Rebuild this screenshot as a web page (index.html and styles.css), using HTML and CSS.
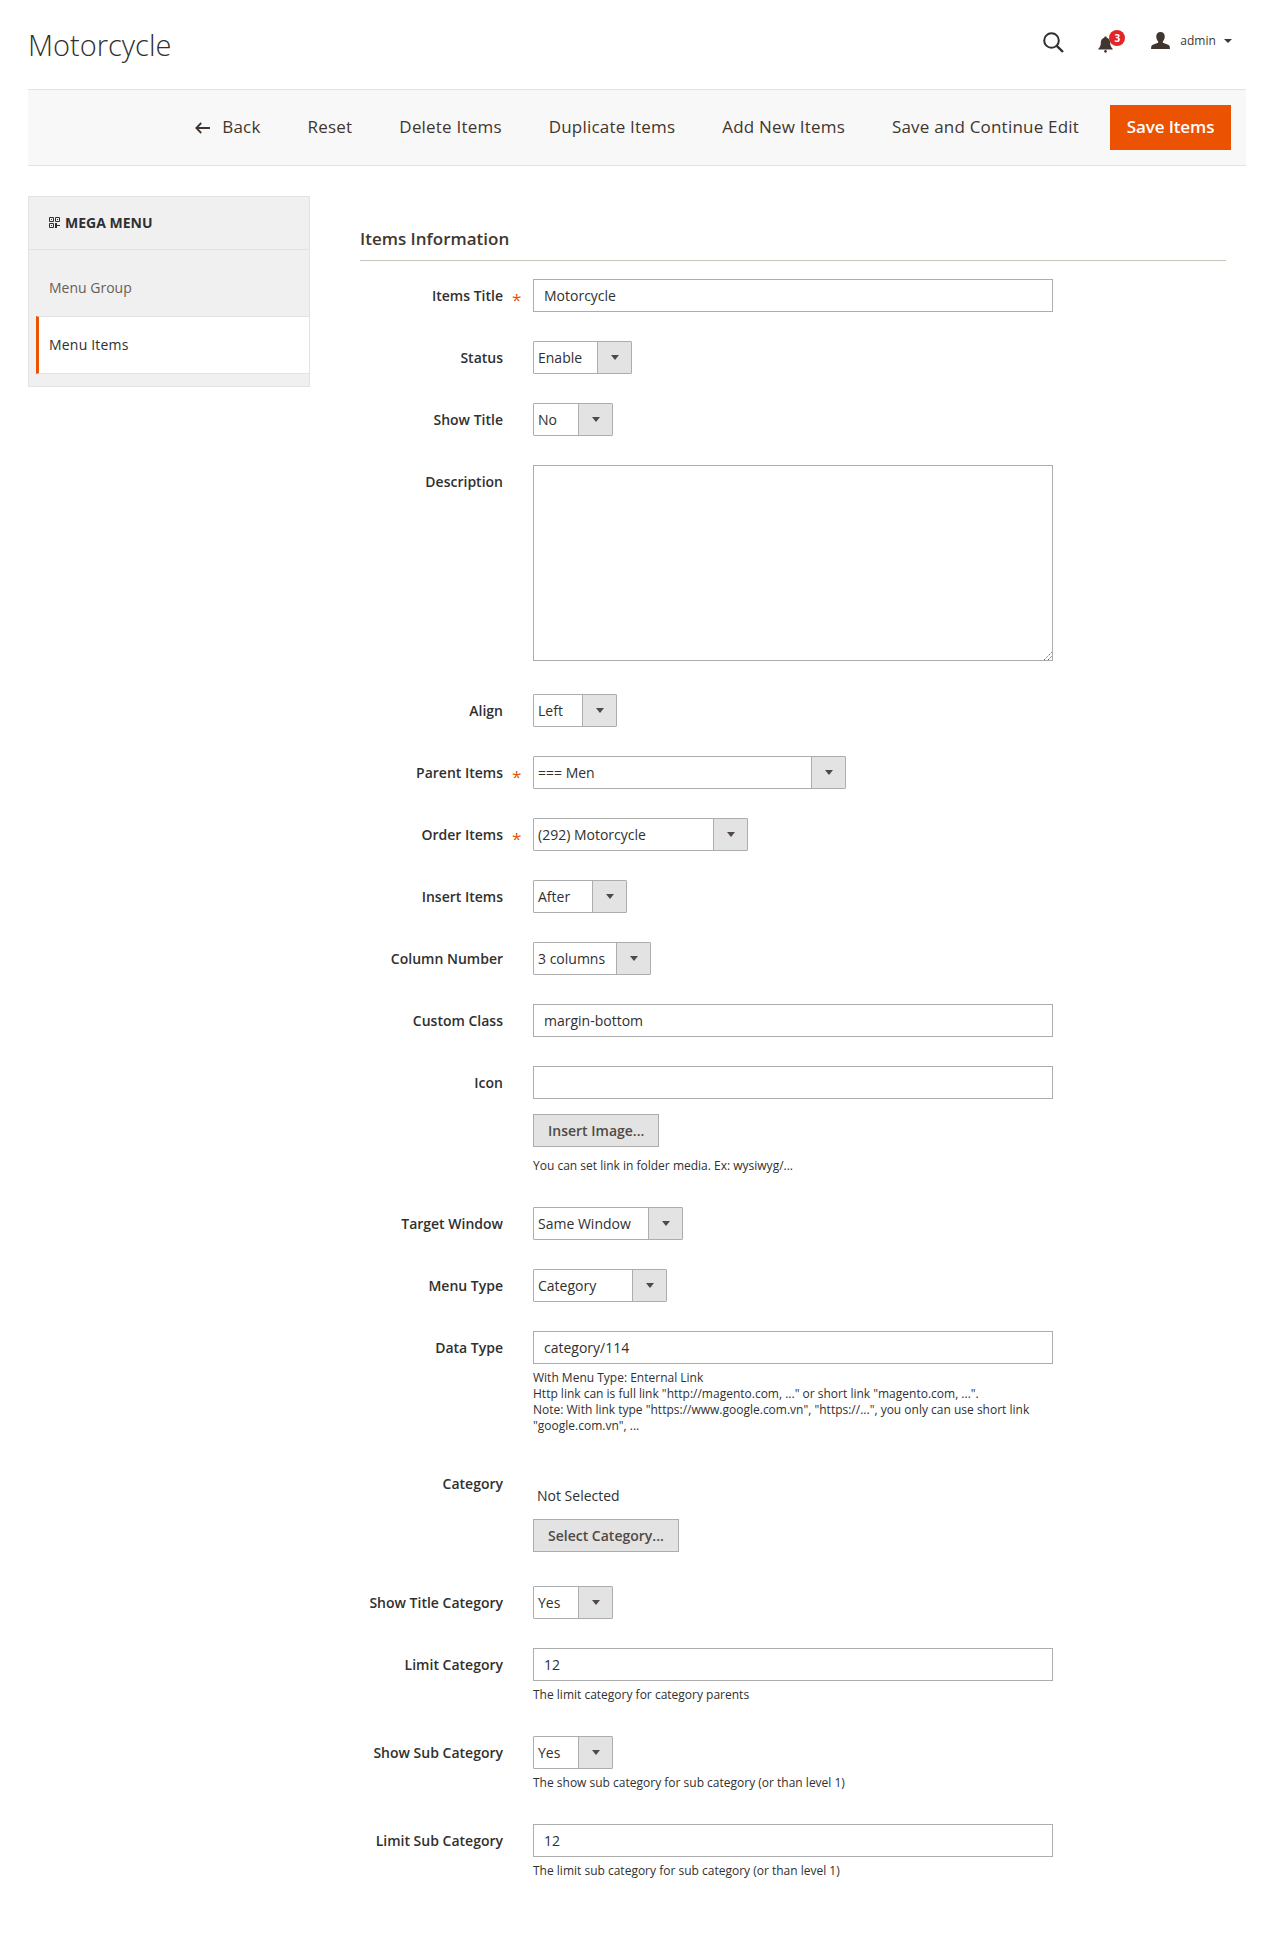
FILE: index.html
```html
<!DOCTYPE html>
<html lang="en">
<head>
<meta charset="utf-8">
<title>Motorcycle</title>
<link rel="stylesheet" href="styles.css">
</head>
<body>
<header class="page-header">
  <h1 class="page-title">Motorcycle</h1>
  <div class="header-tools">
    <svg class="icon-search" width="21" height="21" viewBox="0 0 21 21"><circle cx="8.500" cy="8.500" r="7.300" fill="none" stroke="#303030" stroke-width="2"/><path d="M13.800 13.800 L20 20" stroke="#303030" stroke-width="2.400"/></svg>
    <div class="bell">
      <svg width="15" height="18" viewBox="0 0 17 20"><path d="M8.500 1.500c-.9 0-1.400.6-1.500 1.400C4.500 3.600 3.200 5.700 3.200 8.300c0 3.300-.8 5.200-2.700 6.800v1.100h16v-1.100c-1.900-1.600-2.700-3.500-2.700-6.800 0-2.600-1.300-4.700-3.800-5.400-.1-.8-.6-1.400-1.500-1.400z" fill="#41362f"/><circle cx="8.500" cy="18.300" r="1.500" fill="#41362f"/></svg>
      <span class="bell-badge">3</span>
    </div>
    <div class="user">
      <svg width="19" height="17" viewBox="0 0 20 18"><path d="M10 0c-2.900 0-4.500 2-4.500 4.800 0 2.200.9 4 2 5v1.500c-2.800 1-6.200 1.800-7.200 3.500L0 18h20l-.3-3.200c-1-1.700-4.400-2.500-7.200-3.500V9.800c1.100-1 2-2.800 2-5C14.500 2 12.900 0 10 0z" fill="#41362f"/></svg>
      <span class="user-name">admin</span>
      <span class="caret-small"></span>
    </div>
  </div>
</header>

<nav class="toolbar">
  <a class="tool tool-back">
    <svg width="15" height="12" viewBox="0 0 15 12"><path d="M6.200 1 1.300 6l4.900 5M1.500 6H15" fill="none" stroke="#41362f" stroke-width="1.800"/></svg>
    Back
  </a>
  <a class="tool">Reset</a>
  <a class="tool">Delete Items</a>
  <a class="tool">Duplicate Items</a>
  <a class="tool">Add New Items</a>
  <a class="tool">Save and Continue Edit</a>
  <button class="save-btn">Save Items</button>
</nav>

<main class="layout">
  <aside class="sidebar">
    <div class="sidebar-head">
      <svg width="11" height="11" viewBox="0 0 11 11"><path d="M.5.500h4v4h-4zM6.500.500h4v4h-4zM.5 6.500h4v4h-4z" fill="none" stroke="#303030"/><path d="M2 2h1v1H2zM8 2h1v1H8zM2 8h1v1H2zM6 6h2v2h3v1H8v2H6z" fill="#303030"/></svg>
      <span>MEGA MENU</span>
    </div>
    <div class="side-link">Menu Group</div>
    <div class="side-link side-link-active">Menu Items</div>
  </aside>

  <section class="content">
    <h2 class="section-title">Items Information</h2>

    <div class="row"><label class="label req">Items Title</label><div class="control"><div class="input">Motorcycle</div></div></div>
    <div class="row"><label class="label">Status</label><div class="control"><div class="select w-99"><span>Enable</span><i></i></div></div></div>
    <div class="row"><label class="label">Show Title</label><div class="control"><div class="select w-80"><span>No</span><i></i></div></div></div>
    <div class="row row-text"><label class="label">Description</label><div class="control"><div class="textarea"><svg class="grip" width="9" height="9" viewBox="0 0 9 9"><path d="M1 9 9 1M5 9l4-4" stroke="#666" stroke-dasharray="1.400 1" fill="none"/></svg></div></div></div>
    <div class="row"><label class="label">Align</label><div class="control"><div class="select w-84"><span>Left</span><i></i></div></div></div>
    <div class="row"><label class="label req">Parent Items</label><div class="control"><div class="select w-313"><span>=== Men</span><i></i></div></div></div>
    <div class="row"><label class="label req">Order Items</label><div class="control"><div class="select w-215"><span>(292) Motorcycle</span><i></i></div></div></div>
    <div class="row"><label class="label">Insert Items</label><div class="control"><div class="select w-94"><span>After</span><i></i></div></div></div>
    <div class="row"><label class="label">Column Number</label><div class="control"><div class="select w-118"><span>3 columns</span><i></i></div></div></div>
    <div class="row"><label class="label">Custom Class</label><div class="control"><div class="input">margin-bottom</div></div></div>
    <div class="row row-icon"><label class="label">Icon</label><div class="control"><div class="input"></div><button class="btn btn-insert">Insert Image...</button><p class="note note-after-btn">You can set link in folder media. Ex: wysiwyg/...</p></div></div>
    <div class="row"><label class="label">Target Window</label><div class="control"><div class="select w-150"><span>Same Window</span><i></i></div></div></div>
    <div class="row"><label class="label">Menu Type</label><div class="control"><div class="select w-134"><span>Category</span><i></i></div></div></div>
    <div class="row row-data"><label class="label">Data Type</label><div class="control"><div class="input">category/114</div><p class="note">With Menu Type: Enternal Link<br>Http link can is full link "http://magento.com, ..." or short link "magento.com, ...".<br>Note: With link type "https://www.google.com.vn", "https://...", you only can use short link "google.com.vn", ...</p></div></div>
    <div class="row row-category"><label class="label label-category">Category</label><div class="control"><div class="chooser">Not Selected</div><button class="btn">Select Category...</button></div></div>
    <div class="row"><label class="label">Show Title Category</label><div class="control"><div class="select w-80"><span>Yes</span><i></i></div></div></div>
    <div class="row row-noted"><label class="label">Limit Category</label><div class="control"><div class="input">12</div><p class="note">The limit category for category parents</p></div></div>
    <div class="row row-noted"><label class="label">Show Sub Category</label><div class="control"><div class="select w-80"><span>Yes</span><i></i></div><p class="note">The show sub category for sub category (or than level 1)</p></div></div>
    <div class="row row-noted"><label class="label">Limit Sub Category</label><div class="control"><div class="input">12</div><p class="note">The limit sub category for sub category (or than level 1)</p></div></div>
  </section>
</main>
</body>
</html>
```
FILE: styles.css
```css
* { box-sizing: border-box; }
html, body { margin: 0; padding: 0; }
body {
  background: #fff;
  color: #303030;
  font-family: "Open Sans", "Liberation Sans", sans-serif;
  font-size: 14px;
  height: 1960px;
  padding: 0 28px;
  overflow: hidden;
}
.page-header {
  height: 89px;
  display: flex;
  justify-content: space-between;
  width: 1218px;
}
.page-title {
  margin: 25px 0 0;
  font-size: 29px;
  line-height: 40px;
  font-weight: 300;
  color: #303030;
}
.header-tools {
  display: flex;
  align-items: flex-start;
  padding-top: 32px;
  padding-right: 14px;
}
.icon-search { display: block; margin-right: 34px; }
.bell { position: relative; width: 15px; height: 18px; margin-top: 3px; margin-right: 38px; }
.bell svg { display: block; }
.bell-badge {
  position: absolute;
  left: 11px;
  top: -5px;
  width: 16px;
  height: 16px;
  border-radius: 50%;
  background: #e22626;
  color: #fff;
  font-size: 10px;
  font-weight: 700;
  line-height: 16px;
  text-align: center;
}
.user { display: flex; align-items: center; height: 17px; color: #41362f; }
.user svg { display: block; margin-right: 10px; }
.user-name { font-size: 12px; letter-spacing: .05px; line-height: 17px; }
.caret-small {
  width: 0; height: 0;
  margin-left: 8px;
  border-left: 4px solid transparent;
  border-right: 4px solid transparent;
  border-top: 4px solid #41362f;
}
.toolbar {
  width: 1218px;
  height: 77px;
  display: flex;
  align-items: center;
  justify-content: flex-end;
  gap: 47px;
  padding: 0 15px 0 0;
  background: #f8f8f8;
  border-top: 1px solid #e3e3e3;
  border-bottom: 1px solid #e3e3e3;
}
.tool {
  font-size: 17px;
  font-weight: 500;
  letter-spacing: .2px;
  line-height: 24px;
  margin-top: -2px;
  color: #41362f;
  white-space: nowrap;
}
.tool-back { display: flex; align-items: center; gap: 12px; }
.tool-back svg { display: block; margin-top: 2px; }
.save-btn {
  width: 121px;
  height: 45px;
  margin-left: -16px;
  border: 0;
  background: #eb5202;
  color: #fff;
  font-family: inherit;
  font-size: 17px;
  letter-spacing: -.1px;
  font-weight: 600;
  padding: 0 0 2px;
}
.layout { display: flex; align-items: flex-start; padding-top: 30px; }
.sidebar {
  width: 282px;
  height: 191px;
  background: #f0f0f0;
  border: 1px solid #e3e3e3;
  flex: none;
}
.sidebar-head {
  height: 53px;
  padding: 0 0 2px 20px;
  display: flex;
  align-items: center;
  gap: 5px;
  font-weight: 700;
  font-size: 14px;
  border-bottom: 1px solid #e3e3e3;
}
.sidebar-head svg { display: block; }
.side-link {
  height: 66px;
  padding: 19px 0 0 20px;
  color: #675f58;
  font-size: 14px;
  line-height: 38px;
}
.side-link-active {
  height: 58px;
  margin-left: 7px;
  padding: 0 0 2px 10px;
  line-height: 55px;
  letter-spacing: .2px;
  color: #303030;
  background: #fff;
  border-left: 3px solid #eb5202;
  border-top: 1px solid #e3e3e3;
  border-bottom: 1px solid #e3e3e3;
}
.content { width: 866px; margin-left: 50px; }
.section-title {
  margin: 30px 0 18px;
  height: 35px;
  padding-top: 0;
  font-size: 17px;
  font-weight: 600;
  line-height: 26px;
  color: #41362f;
  border-bottom: 1px solid #c9c4b8;
}
.row { display: flex; margin-bottom: 29px; align-items: flex-start; }
.label {
  width: 143px;
  flex: none;
  padding-right: 0;
  text-align: right;
  font-weight: 600;
  font-size: 14px;
  line-height: 33px;
  color: #303030;
  position: relative;
}
.req::after {
  content: "*";
  position: absolute;
  left: 152px;
  top: 4px;
  color: #eb5202;
  font-size: 17px;
  font-weight: 400;
}
.control { width: 520px; margin-left: 30px; flex: none; }
.input {
  height: 33px;
  border: 1px solid #adadad;
  background: #fff;
  padding: 0 10px;
  line-height: 31px;
  font-size: 14px;
}
.textarea {
  position: relative;
  height: 196px;
  border: 1px solid #adadad;
  background: #fff;
}
.grip { position: absolute; right: 0; bottom: 0; display: block; }
.select {
  height: 33px;
  display: flex;
  border: 1px solid #adadad;
  background: #fff;
  line-height: 31px;
  font-size: 14px;
  border-radius: 1px;
}
.select span { flex: 1; padding-left: 4px; white-space: nowrap; overflow: hidden; }
.select i {
  position: relative;
  width: 34px;
  flex: none;
  background: #e3e3e3;
  border-left: 1px solid #adadad;
}
.select i::after {
  content: "";
  position: absolute;
  left: 13px;
  top: 13px;
  border-left: 4px solid transparent;
  border-right: 4px solid transparent;
  border-top: 5px solid #514943;
}
.w-80 { width: 80px; }
.w-84 { width: 84px; }
.w-94 { width: 94px; }
.w-99 { width: 99px; }
.w-118 { width: 118px; }
.w-134 { width: 134px; }
.w-150 { width: 150px; }
.w-215 { width: 215px; }
.w-313 { width: 313px; }
.btn {
  display: block;
  height: 33px;
  margin-top: 15px;
  padding: 0 14px;
  border: 1px solid #adadad;
  background: #e3e3e3;
  color: #514943;
  font-family: inherit;
  font-size: 14px;
  font-weight: 600;
  line-height: 31px;
}
.note {
  margin: 6px 0 0;
  font-size: 12px;
  line-height: 16px;
  color: #303030;
}
.note-after-btn { margin-top: 11px; }
.row-text { margin-bottom: 33px; }
.row-icon { margin-bottom: 33px; }
.row-data { margin-bottom: 38px; }
.row-category { margin-bottom: 34px; }
.row-noted { margin-bottom: 33px; }
.label-category { line-height: 24px; }
.chooser { padding: 14px 0 0 4px; font-size: 14px; line-height: 20px; height: 47px; }
.chooser + .btn { margin-top: 0; }
```
